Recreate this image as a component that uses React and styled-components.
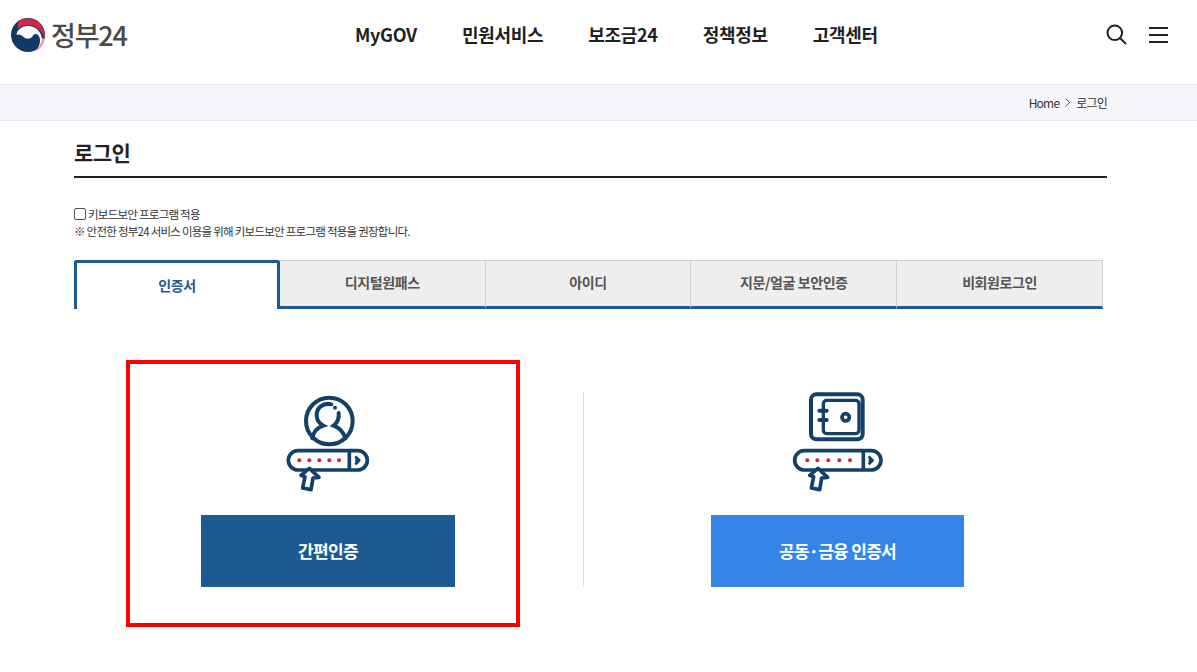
import React from "react";
import styled, { createGlobalStyle } from "styled-components";

const Global = createGlobalStyle`
  html, body { margin: 0; padding: 0; background: #fff; }
  body { font-family: "Noto Sans CJK KR", "Noto Sans", sans-serif; color: #222; overflow: hidden; }
  * { box-sizing: border-box; }
`;
const Page = styled.div`position: relative; width: 1197px; height: 672px; overflow: hidden;`;
const Header = styled.header`
  height: 85px; display: flex; align-items: flex-start; border-bottom: 1px solid #e6e7ea;
`;
const Logo = styled.div`
  display: flex; align-items: center; gap: 6px; margin: 18px 0 0 11px; width: 305px; height: 34px;
`;
const LogoText = styled.span`
  font-size: 27px; line-height: 34px; color: #4a4a4a; letter-spacing: -1.2px; font-weight: 500;
`;
const Nav = styled.nav`display: flex; gap: 45px; margin: 21px 0 0 39px; width: 707px;`;
const NavItem = styled.a`
  font-size: 18px; line-height: 27px; font-weight: 700; color: #1f1f1f; letter-spacing: -0.3px;
`;
const Tools = styled.div`display: flex; align-items: center; gap: 22px; margin: 24px 0 0 44px;`;
const Crumb = styled.div`
  height: 36px; background: #f5f6fa; border-bottom: 1px solid #e9eaed;
  display: flex; justify-content: flex-end; align-items: center; gap: 6px; padding-right: 90px;
  font-size: 12px; letter-spacing: -0.8px; color: #333;
`;
const Main = styled.main`padding-left: 74px; width: 1107px;`;
const Title = styled.h1`
  margin: 0; height: 57px; padding-top: 15px; font-size: 21px; line-height: 33px; font-weight: 700;
  color: #222; border-bottom: 2px solid #222; letter-spacing: -0.6px;
`;
const CheckRow = styled.label`
  display: flex; align-items: center; gap: 2px; margin-top: 28px; height: 16px;
  font-size: 11.5px; line-height: 16px; letter-spacing: -0.75px; color: #333;
`;
const Box = styled.span`
  display: inline-block; width: 12px; height: 12px; border: 1px solid #555; border-radius: 2px; background: #fff;
`;
const Notice = styled.p`
  margin: 1px 0 0; height: 16px; font-size: 11.5px; line-height: 16px; letter-spacing: -0.75px; color: #333;
`;
const Tabs = styled.div`display: flex; width: 1029px; height: 49px; margin-top: 21px;`;
const Tab = styled.div`
  flex: 0 0 20%; display: flex; align-items: center; justify-content: center;
  font-size: 14px; font-weight: 700; letter-spacing: -0.4px; padding-bottom: 3px;
  color: ${p => (p.$active ? "#1c5a91" : "#555")};
  background: ${p => (p.$active ? "#fff" : "#eeeeee")};
  border-style: solid;
  border-color: ${p => (p.$active ? "#1c5a91" : "#cfcfcf")};
  border-width: ${p => (p.$active ? "3px 3px 0 3px" : "1px 1px 0 0")};
  border-bottom: ${p => (p.$active ? "0" : "3px solid #1c5a91")};
  border-radius: ${p => (p.$active ? "3px 3px 0 0" : "0")};
`;
const Panel = styled.section`
  display: grid; grid-template-columns: 509px 1px 507px; margin-top: 83px; height: 195px;
`;
const Col = styled.div`
  display: flex; flex-direction: column; align-items: center; justify-content: space-between;
`;
const Divider = styled.div`background: #dcdcdc;`;
const Action = styled.button`
  width: ${p => p.$w}px; height: 72px; border: 0; color: #fff; font: inherit; font-size: 17px; font-weight: 700;
  letter-spacing: -0.7px; padding: 0 0 2px; background: ${p => p.$bg}; margin-left: ${p => p.$ml || 0}px;
`;
const Icon = styled.svg`display: block; margin-top: -7px; margin-left: ${p => p.$ml}px;`;
const Marker = styled.div`
  position: absolute; left: 126px; top: 360px; width: 394px; height: 267px; border: 4px solid #f00; pointer-events: none;
`;

const NAVY = "#143f68";

const Emblem = () => (
  <svg width="34" height="34" viewBox="0 0 34 34">
    <circle cx="17" cy="17" r="17" fill="#0f3a66" />
    <path d="M8 3C13 0 23-.5 29 5.500 33 10 34.500 15 33.500 21 31.500 14 27 9 20.500 7.500 15.500 6.500 11 7.500 7.500 10.500 6 7.500 6.500 5 8 3z" fill="#cf2a45" />
    <path d="M5.500 17C6 11 12 7.500 18 8 25 8.500 30.500 14 31 21 32 26 29 31 25 33 28 29 30 24 28.500 19.500 27 15.500 24 15 22 17.500 19.500 21.500 15.500 21.500 12.500 19 10.500 17 8 16 5.500 17z" fill="#fff" />
    <path d="M33.500 20C33.500 26 29.500 31 25 33.300 28 29 30.500 25 31 20.500z" fill="#ee9aa8" />
  </svg>
);

const Pointer = ({ x = 0 }) => (
  <path
    transform={`translate(${x} 0)`}
    d="M118 250L147 277 129 279 123 314 98 309 105 275 93 271Z"
    fill="#fff" stroke={NAVY} strokeWidth="11" strokeLinejoin="round"
  />
);

const Dots = ({ xs }) => xs.map(x => <circle key={x} cx={x} cy="226" r="6" fill="#d5203f" />);

const UserIcon = () => (
  <Icon width="110" height="110" viewBox="0 0 330 330" $ml={-7}>
    <g fill="none" stroke={NAVY} strokeWidth="12">
      <circle cx="178" cy="108" r="70" />
      <path d="M184 58C160 52 140 68 140 90C140 104 148 116 160 122C145 127 130 140 127 160" strokeLinecap="round" />
      <path d="M206 84C208 100 202 113 191 122C206 127 222 142 226 160" strokeLinecap="round" />
    </g>
    <circle cx="195" cy="68" r="6" fill={NAVY} />
    <rect x="55" y="197" width="237" height="58" rx="29" fill="#fff" stroke={NAVY} strokeWidth="11" />
    <path d="M238 197v58" stroke={NAVY} strokeWidth="11" />
    <path d="M256 214L268 226 256 238" fill={NAVY} stroke={NAVY} strokeWidth="8" strokeLinejoin="round" />
    <Dots xs={[88, 118, 148, 178, 207]} />
    <Pointer />
  </Icon>
);

const SafeIcon = () => (
  <Icon width="110" height="110" viewBox="0 0 330 330" $ml={-5}>
    <g fill="none" stroke={NAVY}>
      <rect x="93" y="28" width="155" height="135" rx="16" strokeWidth="12" />
      <rect x="130" y="46" width="107" height="100" rx="10" strokeWidth="10" />
      <path d="M118 77h22M118 105h22" strokeWidth="12" strokeLinecap="round" />
      <circle cx="197" cy="97" r="11" strokeWidth="11" />
    </g>
    <rect x="44" y="197" width="259" height="58" rx="29" fill="#fff" stroke={NAVY} strokeWidth="11" />
    <path d="M250 197v58" stroke={NAVY} strokeWidth="11" />
    <path d="M266 214L278 226 266 238" fill={NAVY} stroke={NAVY} strokeWidth="8" strokeLinejoin="round" />
    <Dots xs={[82, 112, 145, 178, 210]} />
    <Pointer x={-4} />
  </Icon>
);

export default function App() {
  return (
    <Page>
      <Global />
      <Header>
        <Logo><Emblem /><LogoText>정부24</LogoText></Logo>
        <Nav>
          {["MyGOV", "민원서비스", "보조금24", "정책정보", "고객센터"].map(n => <NavItem key={n}>{n}</NavItem>)}
        </Nav>
        <Tools>
          <svg width="21" height="21" viewBox="0 0 21 21" fill="none" stroke="#222" strokeWidth="2">
            <circle cx="8.800" cy="8.800" r="7.300" /><path d="M14 14l5.500 5.500" strokeLinecap="round" />
          </svg>
          <svg width="19" height="18" viewBox="0 0 19 18" fill="none" stroke="#222" strokeWidth="2">
            <path d="M0 2h19M0 9h19M0 16h19" />
          </svg>
        </Tools>
      </Header>
      <Crumb>
        <span>Home</span>
        <svg width="5" height="9" viewBox="0 0 5 9" fill="none" stroke="#555"><path d="M.5.5l4 4-4 4" /></svg>
        <span>로그인</span>
      </Crumb>
      <Main>
        <Title>로그인</Title>
        <CheckRow><Box />키보드보안 프로그램 적용</CheckRow>
        <Notice>※ 안전한 정부24 서비스 이용을 위해 키보드보안 프로그램 적용을 권장합니다.</Notice>
        <Tabs>
          <Tab $active>인증서</Tab>
          <Tab>디지털원패스</Tab>
          <Tab>아이디</Tab>
          <Tab>지문/얼굴 보안인증</Tab>
          <Tab>비회원로그인</Tab>
        </Tabs>
        <Panel>
          <Col>
            <UserIcon />
            <Action $w={254} $bg="#1c5a91" $ml={-1}>간편인증</Action>
          </Col>
          <Divider />
          <Col>
            <SafeIcon />
            <Action $w={253} $bg="#3584e8">공동·금융 인증서</Action>
          </Col>
        </Panel>
      </Main>
      <Marker />
    </Page>
  );
}
